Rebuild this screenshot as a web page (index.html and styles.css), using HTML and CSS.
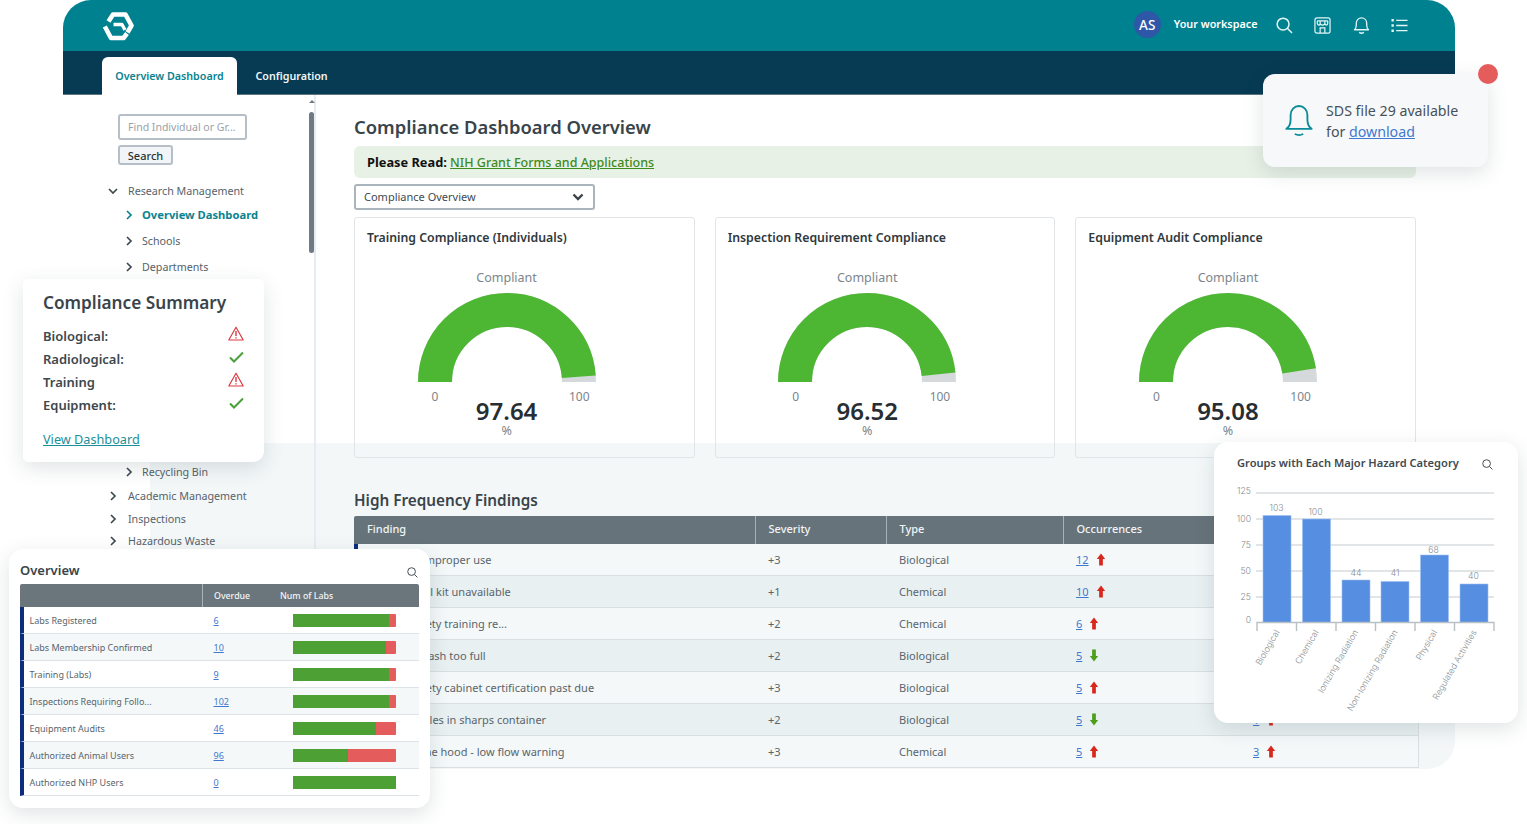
FILE: index.html
```html
<!DOCTYPE html>
<html lang="en">
<head>
<meta charset="utf-8">
<title>Compliance Dashboard Overview</title>
<link rel="stylesheet" href="styles.css">
</head>
<body>
<svg class="defs" width="0" height="0" aria-hidden="true">
  <symbol id="up" viewBox="0 0 10 14"><path d="M5 0.5 9.5 6.5H7V13.5H3V6.5H.5Z"/></symbol>
  <symbol id="down" viewBox="0 0 10 14"><path d="M5 13.5 .5 7.5H3V.5H7V7.5H9.5Z"/></symbol>
  <symbol id="chev" viewBox="0 0 8 10"><path d="M2 1 6 5 2 9" fill="none" stroke="currentColor" stroke-width="1.7"/></symbol>
  <symbol id="warn" viewBox="0 0 16 15"><path d="M8 1.2 15.2 14H.8Z" fill="none" stroke="currentColor" stroke-width="1.2" stroke-linejoin="round"/><path d="M8 5V10M8 11.2V12.6" fill="none" stroke="currentColor" stroke-width="1.4"/></symbol>
  <symbol id="check" viewBox="0 0 15 12"><path d="M1 6.5 5 10.5 14 1.5" fill="none" stroke="currentColor" stroke-width="2"/></symbol>
  <symbol id="lens" viewBox="0 0 18 18"><circle cx="7.5" cy="7.5" r="6.3" fill="none" stroke="currentColor" stroke-width="1.6"/><path d="M12.2 12.2 17 17" fill="none" stroke="currentColor" stroke-width="1.6"/></symbol>
  <symbol id="gauge97" viewBox="-89 -89 178 89"><path class="gauge-track" d="M-72 0A72 72 0 0 1 72 0"/><path class="gauge-fill" d="M-72 0A72 72 0 0 1 72 0" pathLength="100" stroke-dasharray="97.64 100"/></symbol>
  <symbol id="gauge96" viewBox="-89 -89 178 89"><path class="gauge-track" d="M-72 0A72 72 0 0 1 72 0"/><path class="gauge-fill" d="M-72 0A72 72 0 0 1 72 0" pathLength="100" stroke-dasharray="96.52 100"/></symbol>
  <symbol id="gauge95" viewBox="-89 -89 178 89"><path class="gauge-track" d="M-72 0A72 72 0 0 1 72 0"/><path class="gauge-fill" d="M-72 0A72 72 0 0 1 72 0" pathLength="100" stroke-dasharray="95.08 100"/></symbol>
</svg>

<div class="app">
  <header class="topbar">
    <svg class="logo" viewBox="0 0 32 31" fill="none" stroke="#fff" stroke-width="4.6" stroke-linejoin="round">
      <path d="M6.500 10.500 11 3.500H23.500L29.500 14.500 25.500 21.500"/>
      <path d="M11.500 13.500H20L23 19" stroke-width="3.400"/>
      <path d="M2.800 15.500 9 27H21.500L25 22.500"/>
    </svg>
    <div class="topbar-right">
      <span class="avatar">AS</span>
      <span class="workspace">Your workspace</span>
      <svg class="top-icon icon-search"><use href="#lens"/></svg>
      <svg class="top-icon" viewBox="0 0 18 18" fill="none" stroke="currentColor" stroke-width="1.3">
        <rect x="1" y="1" width="16" height="16" rx="2"/>
        <path d="M3.500 4H14.500M3.500 4V7C3.500 9 6.500 9 6.500 7 6.500 9 11.500 9 11.500 7 11.500 9 14.500 9 14.500 7V4M6.500 4V7M11.500 4V7M6.500 17V11.500H11.500V17"/>
      </svg>
      <svg class="top-icon" viewBox="0 0 18 18" fill="none" stroke="currentColor" stroke-width="1.4">
        <path d="M1.500 13.500C3 12.500 3.500 11 3.500 8.500V6.500C3.500 3.200 6 1 9 1S14.500 3.200 14.500 6.500V8.500C14.500 11 15 12.500 16.500 13.500Z" stroke-linejoin="round"/>
        <path d="M6.500 16.300C8 17.400 10 17.400 11.500 16.300"/>
      </svg>
      <svg class="top-icon" viewBox="0 0 18 18" fill="none" stroke="currentColor" stroke-width="1.4">
        <path d="M5.500 3.500H17.500M5.500 9H17.500M5.500 14.500H17.500"/>
        <path d="M.5 3.500H3M.5 9H3M.5 14.500H3" stroke-width="2.600"/>
      </svg>
    </div>
  </header>

  <nav class="tabs">
    <a class="tab tab-active">Overview Dashboard</a>
    <a class="tab">Configuration</a>
  </nav>

  <div class="content">
    <div class="tint"></div>

    <aside class="sidebar">
      <div class="scrollbar"><span class="scroll-arrow"></span><span class="scroll-thumb"></span></div>
      <div class="search-input">Find Individual or Gr...</div>
      <button class="search-button">Search</button>
      <ul class="tree">
        <li class="tree-top tree-first"><svg class="chev chev-open"><use href="#chev"/></svg>Research Management</li>
        <li class="tree-sub tree-current"><svg class="chev"><use href="#chev"/></svg>Overview Dashboard</li>
        <li class="tree-sub"><svg class="chev"><use href="#chev"/></svg>Schools</li>
        <li class="tree-sub tree-before-gap"><svg class="chev"><use href="#chev"/></svg>Departments</li>
        <li class="tree-sub"><svg class="chev"><use href="#chev"/></svg>Recycling Bin</li>
        <li class="tree-top"><svg class="chev"><use href="#chev"/></svg>Academic Management</li>
        <li class="tree-top"><svg class="chev"><use href="#chev"/></svg>Inspections</li>
        <li class="tree-top"><svg class="chev"><use href="#chev"/></svg>Hazardous Waste</li>
      </ul>
    </aside>

    <main class="main">
      <h1 class="page-title">Compliance Dashboard Overview</h1>
      <div class="banner"><b>Please Read:</b> <a>NIH Grant Forms and Applications</a></div>
      <div class="select">Compliance Overview
        <svg class="select-caret" viewBox="0 0 12 8"><path d="M1.500 1.500 6 6 10.500 1.500" fill="none" stroke="currentColor" stroke-width="2.400"/></svg>
      </div>

      <section class="gauges">
        <article class="gauge-card">
          <h3>Training Compliance (Individuals)</h3>
          <div class="gauge-label">Compliant</div>
          <svg class="gauge"><use href="#gauge97"/></svg>
          <div class="gauge-scale"><span>0</span><span>100</span></div>
          <div class="gauge-value">97.64</div>
          <div class="gauge-unit">%</div>
        </article>
        <article class="gauge-card">
          <h3>Inspection Requirement Compliance</h3>
          <div class="gauge-label">Compliant</div>
          <svg class="gauge"><use href="#gauge96"/></svg>
          <div class="gauge-scale"><span>0</span><span>100</span></div>
          <div class="gauge-value">96.52</div>
          <div class="gauge-unit">%</div>
        </article>
        <article class="gauge-card">
          <h3>Equipment Audit Compliance</h3>
          <div class="gauge-label">Compliant</div>
          <svg class="gauge"><use href="#gauge95"/></svg>
          <div class="gauge-scale"><span>0</span><span>100</span></div>
          <div class="gauge-value">95.08</div>
          <div class="gauge-unit">%</div>
        </article>
      </section>

      <h2 class="section-title">High Frequency Findings</h2>
      <table class="findings">
        <colgroup><col class="c1"><col class="c2"><col class="c3"><col class="c4"><col class="c5"></colgroup>
        <thead><tr><th>Finding</th><th>Severity</th><th>Type</th><th>Occurrences</th><th></th></tr></thead>
        <tbody>
          <tr><td>Biohazard improper use</td><td>+3</td><td>Biological</td><td><a>12</a><svg class="arrow up"><use href="#up"/></svg></td><td></td></tr>
          <tr><td>Mercury spill kit unavailable</td><td>+1</td><td>Chemical</td><td><a>10</a><svg class="arrow up"><use href="#up"/></svg></td><td></td></tr>
          <tr><td>General safety training re...</td><td>+2</td><td>Chemical</td><td><a>6</a><svg class="arrow up"><use href="#up"/></svg></td><td></td></tr>
          <tr><td>Biological trash too full</td><td>+2</td><td>Biological</td><td><a>5</a><svg class="arrow down"><use href="#down"/></svg></td><td></td></tr>
          <tr><td>Primary safety cabinet certification past due</td><td>+3</td><td>Biological</td><td><a>5</a><svg class="arrow up"><use href="#up"/></svg></td><td></td></tr>
          <tr><td>Excess needles in sharps container</td><td>+2</td><td>Biological</td><td><a>5</a><svg class="arrow down"><use href="#down"/></svg></td><td><a>1</a><svg class="arrow up"><use href="#up"/></svg></td></tr>
          <tr><td>Blocked fume hood - low flow warning</td><td>+3</td><td>Chemical</td><td><a>5</a><svg class="arrow up"><use href="#up"/></svg></td><td><a>3</a><svg class="arrow up"><use href="#up"/></svg></td></tr>
        </tbody>
      </table>
    </main>
  </div>
</div>

<aside class="float notice">
  <span class="notice-dot"></span>
  <svg class="notice-bell" viewBox="0 0 30 34" fill="none" stroke="currentColor" stroke-width="2">
    <path d="M1.500 26C4.500 24 6 21 6 16V11C6 5.500 10 1.500 15 1.500S24 5.500 24 11V16C24 21 25.500 24 28.500 26Z" stroke-linejoin="round"/>
    <path d="M10.500 31.500C13.500 33 16.500 33 19.500 31.500"/>
  </svg>
  <p>SDS file 29 available<br>for <a>download</a></p>
</aside>

<aside class="float summary">
  <h3>Compliance Summary</h3>
  <div class="summary-row">Biological:<svg class="status warn"><use href="#warn"/></svg></div>
  <div class="summary-row">Radiological:<svg class="status ok"><use href="#check"/></svg></div>
  <div class="summary-row">Training<svg class="status warn"><use href="#warn"/></svg></div>
  <div class="summary-row">Equipment:<svg class="status ok"><use href="#check"/></svg></div>
  <a class="summary-link">View Dashboard</a>
</aside>

<aside class="float overview">
  <div class="overview-head"><h3>Overview</h3><svg class="card-search"><use href="#lens"/></svg></div>
  <div class="ov-table">
    <div class="ov-header"><span class="ov-h-name"></span><span class="ov-h-due">Overdue</span><span>Num of Labs</span></div>
    <div class="ov-row"><span class="ov-name">Labs Registered</span><a class="ov-due">6</a><span class="bar"><i style="width:93.7%"></i></span></div>
    <div class="ov-row"><span class="ov-name">Labs Membership Confirmed</span><a class="ov-due">10</a><span class="bar"><i style="width:90.3%"></i></span></div>
    <div class="ov-row"><span class="ov-name">Training (Labs)</span><a class="ov-due">9</a><span class="bar"><i style="width:93.9%"></i></span></div>
    <div class="ov-row"><span class="ov-name">Inspections Requiring Follo...</span><a class="ov-due">102</a><span class="bar"><i style="width:93.9%"></i></span></div>
    <div class="ov-row"><span class="ov-name">Equipment Audits</span><a class="ov-due">46</a><span class="bar"><i style="width:80.6%"></i></span></div>
    <div class="ov-row"><span class="ov-name">Authorized Animal Users</span><a class="ov-due">96</a><span class="bar"><i style="width:53.6%"></i></span></div>
    <div class="ov-row"><span class="ov-name">Authorized NHP Users</span><a class="ov-due">0</a><span class="bar"><i style="width:100%"></i></span></div>
  </div>
</aside>

<aside class="float hazard">
  <div class="hazard-head"><h3>Groups with Each Major Hazard Category</h3><svg class="card-search"><use href="#lens"/></svg></div>
  <svg class="chart" viewBox="0 0 304 240" width="304" height="240">
    <g class="grid">
      <path d="M42 10H280M42 36H280M42 62H280M42 88H280M42 114H280"/>
    </g>
    <g class="y-labels">
      <text x="37" y="11">125</text><text x="37" y="39">100</text><text x="37" y="65">75</text>
      <text x="37" y="91">50</text><text x="37" y="117">25</text><text x="37" y="140">0</text>
    </g>
    <g class="bars">
      <rect x="49" y="32.500" width="28" height="107"/>
      <rect x="88.500" y="36" width="28" height="103.500"/>
      <rect x="128" y="97" width="28" height="42.500"/>
      <rect x="167" y="98.500" width="28" height="41"/>
      <rect x="206.500" y="72" width="28" height="67.500"/>
      <rect x="246" y="101" width="28" height="38.500"/>
    </g>
    <g class="bar-values">
      <text x="62.500" y="28">103</text><text x="101.500" y="32">100</text><text x="142" y="93">44</text>
      <text x="181" y="93">41</text><text x="219.500" y="70">68</text><text x="259.500" y="96">40</text>
    </g>
    <path class="axis" d="M43 148V139.500H280V148M82.500 148V139.500M122 148V139.500M161.500 148V139.500M201 148V139.500M240.500 148V139.500"/>
    <g class="x-labels">
      <text transform="translate(66 149) rotate(-60)">Biological</text>
      <text transform="translate(105 149) rotate(-60)">Chemical</text>
      <text transform="translate(144.500 149) rotate(-60)">Ionizing Radiation</text>
      <text transform="translate(184 149) rotate(-60)">Non-Ionizing Radiation</text>
      <text transform="translate(223.500 149) rotate(-60)">Physical</text>
      <text transform="translate(263 149) rotate(-60)">Regulated Activities</text>
    </g>
  </svg>
</aside>
</body>
</html>
```

FILE: styles.css
```css
* { box-sizing: border-box; }
html, body { margin: 0; height: 824px; overflow: hidden; background: #fff; }
body { position: relative; width: 1527px; font-family: "Noto Sans", sans-serif; color: #3d474d; }
h1, h2, h3, p, ul { margin: 0; padding: 0; }
.defs { position: absolute; }
.gauge-track { fill: none; stroke: #d5d9dc; stroke-width: 34; }
.gauge-fill { fill: none; stroke: #4db733; stroke-width: 34; }

.app { width: 1392px; margin-left: 63px; }

.topbar { height: 51px; background: #00818f; border-radius: 28px 28px 0 0; display: flex; align-items: center; justify-content: space-between; padding: 0 47px 0 39px; color: #fff; }
.logo { width: 32px; height: 31px; display: block; margin-top: 1px; }
.topbar-right { display: flex; align-items: center; }
.avatar { width: 27px; height: 27px; border-radius: 50%; background: #2f57a8; font-size: 13.5px; font-weight: 500; display: flex; align-items: center; justify-content: center; margin-right: 13px; margin-top: -2px; }
.workspace { font-size: 10.800px; font-weight: 600; margin-right: 18px; margin-top: -5px; }
.top-icon { width: 17px; height: 17px; margin-right: 21.5px; color: #e4f5f6; }
.top-icon:last-child { margin-right: 0; }

.tabs { height: 44px; background: #073a53; padding-left: 39px; display: flex; align-items: flex-end; border-bottom: 1px solid #5d7583; }
.tab { height: 38px; display: flex; align-items: center; justify-content: center; font-size: 10.700px; font-weight: 600; color: #f0f6f7; padding: 0 19px 1px 18.500px; margin-bottom: -1px; }
.tab-active { width: 135px; padding: 0 0 1px; background: #fff; color: #0a8390; border-radius: 6px 6px 0 0; }

.content { position: relative; display: flex; height: 674px; }
.tint { position: absolute; left: 87px; right: 0; top: 348px; bottom: 0; background: #f3f7f8; border-bottom-right-radius: 28px; }

.sidebar { position: relative; width: 253px; flex: none; padding: 19px 0 0 55px; border-right: 2px solid #e6ecf3; }
.scrollbar { position: absolute; right: -1px; top: 0; width: 7px; height: 158px; }
.scroll-arrow { position: absolute; left: 1px; top: 5px; border: 3px solid transparent; border-top: 0; border-bottom: 3px solid #6f7a82; }
.scroll-thumb { position: absolute; left: 1px; top: 17px; width: 5px; height: 141px; border-radius: 3px; background: #6f7a82; }
.search-input { width: 129px; height: 26px; border: 2px solid #b6bfc7; border-radius: 3px; padding: 0 8px; font-size: 10.500px; line-height: 22px; color: #98a2a8; }
.search-button { display: block; width: 55px; height: 20px; margin-top: 5px; padding: 0; background: #f2f5f7; border: 2px solid #b6bfc7; border-radius: 3px; font: 500 11px "Noto Sans", sans-serif; color: #2b3338; }
.tree { list-style: none; margin-left: -11px; margin-top: 14px; font-size: 10.700px; color: #56626a; }
.tree li { display: flex; align-items: center; position: relative; white-space: nowrap; }
.tree-top { height: 22.500px; padding-left: 21px; }
.tree .tree-first { height: 24px; }
.tree-sub { height: 25.700px; padding-left: 35px; }
.tree .tree-current { color: #0a8390; font-size: 11.200px; font-weight: 700; height: 23px; margin-bottom: 2px; }
.tree .tree-before-gap { margin-bottom: 179.900px; }
.chev { position: absolute; width: 8px; height: 10px; color: #3f4a50; }
.tree-top .chev { left: 2px; }
.tree-sub .chev { left: 18px; }
.tree-current .chev { color: #0a8390; }
.chev-open { transform: rotate(90deg); }

.main { position: relative; flex: 1; min-width: 0; padding: 0 39px 0 38px; }
.page-title { font-size: 18.400px; font-weight: 600; line-height: 28px; margin-top: 18px; color: #39444a; }
.banner { height: 32px; margin-top: 5px; padding-left: 13px; background: #e8f1e6; border-radius: 6px; font-size: 12.500px; line-height: 33px; color: #111; }
.banner b { font-weight: 700; font-size: 12.800px; }
.banner a { color: #3f8a1c; text-decoration: underline; font-weight: 500; }
.select { position: relative; width: 241px; height: 26px; margin-top: 6px; border: 2px solid #aab4bc; border-radius: 3px; padding-left: 8px; font-size: 11px; line-height: 22px; color: #3f4a50; }
.select-caret { position: absolute; right: 9px; top: 7px; width: 12px; height: 8px; color: #39444a; }

.gauges { display: grid; grid-template-columns: repeat(3, 1fr); gap: 20px; margin-top: 6.500px; }
.gauge-card { height: 241px; border: 1px solid #e1e5e8; border-radius: 3px; padding: 11px 47.500px 0 12px; text-align: center; position: relative; }
.gauge-card h3 { font-size: 12.300px; font-weight: 600; color: #2f383d; text-align: left; line-height: 18px; white-space: nowrap; }
.gauge-label { font-size: 12.500px; color: #7b858b; line-height: 18px; margin-top: 22px; }
.gauge { display: block; width: 178px; height: 89px; margin: 6px auto 0; }
.gauge-scale { width: 178px; margin: 7px auto 0; padding: 0 6px 0 14px; display: flex; justify-content: space-between; font-size: 12px; line-height: 16px; color: #7b858b; }
.gauge-value { font-size: 24px; font-weight: 600; color: #272e33; line-height: 24px; margin-top: -6px; }
.gauge-unit { font-size: 12.500px; color: #7b858b; line-height: 12px; margin-top: 2px; }

.section-title { position: relative; font-size: 15.300px; font-weight: 600; line-height: 24px; margin-top: 30px; color: #39444a; }
.findings { position: relative; width: 1064px; margin-top: 4px; border-collapse: collapse; table-layout: fixed; font-size: 11px; color: #59656c; }
.c1 { width: 401px; } .c2 { width: 131px; } .c3 { width: 177px; } .c4 { width: 177px; } .c5 { width: 178px; }
.findings th { height: 28px; background: #67737a; color: #f2f5f6; font-weight: 500; text-align: left; padding: 0 0 2px 13px; border-right: 1px solid #a8b1b6; }
.findings th:last-child { border-right: 0; }
.findings thead tr th:first-child { border-top-left-radius: 2px; }
.findings td { height: 32px; padding: 0 0 0 13px; border-bottom: 1.500px solid #d9e0e3; white-space: nowrap; background: #f4f8f9; }
.findings tbody tr:nth-child(even) td { background: #e9f0f2; }
.findings td:first-child { box-shadow: inset 4px 0 0 #0b2d7c; }
.findings td:last-child { border-right: 1px solid #d9e0e3; }
.findings a { color: #3f78cf; text-decoration: underline; }
.arrow { display: inline-block; width: 10px; height: 13px; margin-left: 7px; vertical-align: -2px; }
.arrow.up { fill: #d8281e; }
.arrow.down { fill: #4d9e1c; }

.float { position: absolute; background: #fff; box-shadow: 0 6px 20px rgba(50, 65, 75, 0.15); }

.notice { left: 1263px; top: 74px; width: 225px; height: 93px; background: #f7f8fa; border-radius: 12px; display: flex; align-items: center; padding-left: 22px; }
.notice-dot { position: absolute; right: -10px; top: -10px; width: 20px; height: 20px; border-radius: 50%; background: #e55c5c; }
.notice-bell { width: 28px; height: 33px; flex: none; color: #0a8c98; margin-right: 13px; }
.notice p { font-size: 14.200px; line-height: 21px; color: #475158; }
.notice a { color: #3f78cf; text-decoration: underline; }

.summary { left: 23px; top: 279px; width: 241px; height: 183px; border-radius: 5px 5px 11px 5px; padding: 12px 20px 0; }
.summary h3 { font-size: 17.200px; font-weight: 600; line-height: 24px; color: #39444a; margin-bottom: 9px; }
.summary-row { height: 23.200px; display: flex; align-items: center; justify-content: space-between; font-size: 13px; font-weight: 600; color: #3d474d; }
.status { width: 16px; height: 15px; margin-top: -4px; }
.status.warn { color: #dc3a42; }
.status.ok { color: #4aa038; width: 15px; height: 12px; }
.summary-link { display: inline-block; margin-top: 12px; font-size: 12.700px; line-height: 20px; color: #1a8f9a; text-decoration: underline; }

.overview { left: 9px; top: 549px; width: 421px; height: 259px; border-radius: 14px; padding: 0 11px; }
.overview-head { height: 35px; display: flex; justify-content: space-between; align-items: center; padding-top: 7px; }
.overview-head h3 { font-size: 13px; font-weight: 600; color: #39444a; }
.card-search { width: 11px; height: 11px; color: #3f4a50; }
.overview-head .card-search { margin-top: 5px; margin-right: 1px; }
.ov-table { width: 399px; }
.ov-header { height: 23px; background: #6a757c; border-radius: 2px 2px 0 0; display: flex; align-items: center; font-size: 8.800px; font-weight: 500; color: #f2f5f6; }
.ov-h-name { width: 183px; height: 100%; border-right: 1px solid #a8b1b6; }
.ov-h-due { flex: none; width: 77px; padding-left: 11px; }
.ov-row { height: 27px; display: flex; align-items: center; border-left: 4.500px solid #0b2d7c; border-bottom: 1px solid #dde3e6; font-size: 9px; color: #59656c; background: #fff; }
.ov-row:nth-child(odd) { background: #f4f8f9; }
.ov-name { width: 184px; padding-left: 5.500px; flex: none; white-space: nowrap; }
.ov-due { width: 79px; flex: none; margin-left: 5.500px; color: #3f78cf; text-decoration: underline; }
.bar { display: block; width: 103px; height: 13px; background: #e55c5c; border-radius: 1px; }
.bar i { display: block; height: 100%; background: #4da034; }

.hazard { left: 1214px; top: 442px; width: 304px; height: 281px; border-radius: 14px; }
.hazard-head { height: 41px; display: flex; justify-content: space-between; align-items: center; padding: 0 25px 0 23px; }
.hazard-head h3 { font-size: 11.100px; font-weight: 600; color: #3f4a50; }
.hazard-head .card-search { margin-top: 4px; }
.chart { display: block; }
.grid path { stroke: #d8dde0; stroke-width: 1.500; fill: none; }
.bars rect { fill: #568ee2; stroke: #9fc0ef; stroke-width: .6; }
.axis { fill: none; stroke: #b9c0c4; stroke-width: 1.400; }
.chart text { font-family: Inter, "Noto Sans", sans-serif; font-weight: 300; font-size: 8.700px; fill: #858d92; }
.y-labels text { text-anchor: end; }
.bar-values text { text-anchor: middle; }
.x-labels text { text-anchor: end; }
```
